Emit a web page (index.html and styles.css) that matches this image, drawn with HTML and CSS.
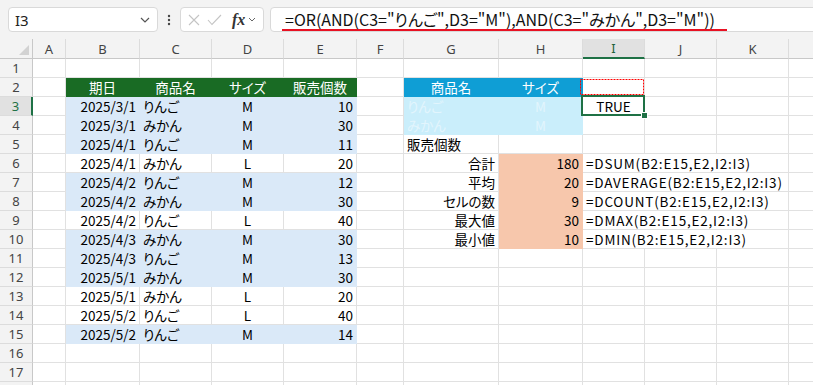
FILE: index.html
```html
<!DOCTYPE html>
<html lang="ja">
<head>
    <meta charset="UTF-8">
    <title>DSUM sheet</title>
    <link rel="stylesheet" href="styles.css">
</head>
<body>
    <div class="toolbar">
        <div class="namebox">
            <span>I3</span>
            <svg width="10" height="6" viewBox="0 0 10 6"><polyline points="1,1 5,5 9,1" fill="none" stroke="#555" stroke-width="1.2"/></svg>
        </div>
        <div class="dots">
            <svg width="4" height="12" viewBox="0 0 4 12"><circle cx="2" cy="2" r="1.2" fill="#444"/><circle cx="2" cy="6" r="1.2" fill="#444"/><circle cx="2" cy="10" r="1.2" fill="#444"/></svg>
        </div>
        <div class="fxbox">
            <svg width="12" height="12" viewBox="0 0 12 12"><path d="M1 1L11 11M11 1L1 11" stroke="#c4c4c4" stroke-width="1.1"/></svg>
            <svg width="15" height="12" viewBox="0 0 15 12"><polyline points="1,6 5,10.5 14,1" fill="none" stroke="#c4c4c4" stroke-width="1.1"/></svg>
            <span class="fx">fx</span>
            <svg width="8" height="5" viewBox="0 0 8 5"><polyline points="1,1 4,4 7,1" fill="none" stroke="#666" stroke-width="1"/></svg>
        </div>
        <div class="formula">
            <span class="ftext">=OR(AND(C3="りんご",D3="M"),AND(C3="みかん",D3="M"))</span>
        </div>
    </div>

    <div class="sheet">
        <!-- column headers -->
        <div class="corner"><svg width="10" height="10" viewBox="0 0 10 10"><polygon points="10,0 10,10 0,10" fill="#d2d2d2"/></svg></div>
        <div class="ch">A</div><div class="ch">B</div><div class="ch">C</div><div class="ch">D</div><div class="ch">E</div><div class="ch">F</div>
        <div class="ch">G</div><div class="ch">H</div><div class="ch sel">I</div><div class="ch">J</div><div class="ch">K</div><div class="ch last"></div>

        <!-- 1 -->
        <div class="rh">1</div>
        <div class="c"></div><div class="c"></div><div class="c"></div><div class="c"></div><div class="c"></div><div class="c"></div>
        <div class="c"></div><div class="c"></div><div class="c"></div><div class="c"></div><div class="c"></div><div class="c last"></div>

        <!-- 2 -->
        <div class="rh">2</div>
        <div class="c"></div>
        <div class="c th">期日</div><div class="c th">商品名</div><div class="c th">サイズ</div><div class="c th">販売個数</div>
        <div class="c"></div>
        <div class="c bh">商品名</div><div class="c bh">サイズ</div>
        <div class="c ref">
            <svg class="marquee" width="64" height="16" viewBox="0 0 64 16"><rect x="0.5" y="0.5" width="63" height="15" fill="none" stroke="#f00" stroke-width="1" stroke-dasharray="2 1"/></svg>
        </div>
        <div class="c"></div><div class="c"></div><div class="c last"></div>

        <!-- 3 -->
        <div class="rh sel">3</div>
        <div class="c"></div>
        <div class="c bl r">2025/3/1</div><div class="c bl">りんご</div><div class="c bl m">M</div><div class="c bl r">10</div>
        <div class="c"></div>
        <div class="c cy">りんご</div><div class="c cy m">M</div>
        <div class="c cur m">TRUE</div><div class="c"></div><div class="c"></div><div class="c last"></div>

        <!-- 4 -->
        <div class="rh">4</div>
        <div class="c"></div>
        <div class="c bl r">2025/3/1</div><div class="c bl">みかん</div><div class="c bl m">M</div><div class="c bl r">30</div>
        <div class="c"></div>
        <div class="c cy">みかん</div><div class="c cy m">M</div>
        <div class="c"></div><div class="c"></div><div class="c"></div><div class="c last"></div>

        <!-- 5 -->
        <div class="rh">5</div>
        <div class="c"></div>
        <div class="c bl r">2025/4/1</div><div class="c bl">りんご</div><div class="c bl m">M</div><div class="c bl r">11</div>
        <div class="c"></div>
        <div class="c wide">販売個数</div><div class="c"></div>
        <div class="c"></div><div class="c"></div><div class="c"></div><div class="c last"></div>

        <!-- 6 -->
        <div class="rh">6</div>
        <div class="c"></div>
        <div class="c r">2025/4/1</div><div class="c">みかん</div><div class="c m">L</div><div class="c r">20</div>
        <div class="c"></div>
        <div class="c r">合計</div><div class="c sa r">180</div>
        <div class="c span3">=DSUM(B2:E15,E2,I2:I3)</div><div class="c last"></div>

        <!-- 7 -->
        <div class="rh">7</div>
        <div class="c"></div>
        <div class="c bl r">2025/4/2</div><div class="c bl">りんご</div><div class="c bl m">M</div><div class="c bl r">12</div>
        <div class="c"></div>
        <div class="c r">平均</div><div class="c sa r">20</div>
        <div class="c span3">=DAVERAGE(B2:E15,E2,I2:I3)</div><div class="c last"></div>

        <!-- 8 -->
        <div class="rh">8</div>
        <div class="c"></div>
        <div class="c bl r">2025/4/2</div><div class="c bl">みかん</div><div class="c bl m">M</div><div class="c bl r">30</div>
        <div class="c"></div>
        <div class="c r">セルの数</div><div class="c sa r">9</div>
        <div class="c span3">=DCOUNT(B2:E15,E2,I2:I3)</div><div class="c last"></div>

        <!-- 9 -->
        <div class="rh">9</div>
        <div class="c"></div>
        <div class="c r">2025/4/2</div><div class="c">りんご</div><div class="c m">L</div><div class="c r">40</div>
        <div class="c"></div>
        <div class="c r">最大値</div><div class="c sa r">30</div>
        <div class="c span3">=DMAX(B2:E15,E2,I2:I3)</div><div class="c last"></div>

        <!-- 10 -->
        <div class="rh">10</div>
        <div class="c"></div>
        <div class="c bl r">2025/4/3</div><div class="c bl">みかん</div><div class="c bl m">M</div><div class="c bl r">30</div>
        <div class="c"></div>
        <div class="c r">最小値</div><div class="c sa r">10</div>
        <div class="c span3">=DMIN(B2:E15,E2,I2:I3)</div><div class="c last"></div>

        <!-- 11 -->
        <div class="rh">11</div>
        <div class="c"></div>
        <div class="c bl r">2025/4/3</div><div class="c bl">りんご</div><div class="c bl m">M</div><div class="c bl r">13</div>
        <div class="c"></div><div class="c"></div><div class="c"></div><div class="c"></div><div class="c"></div><div class="c"></div><div class="c last"></div>

        <!-- 12 -->
        <div class="rh">12</div>
        <div class="c"></div>
        <div class="c bl r">2025/5/1</div><div class="c bl">みかん</div><div class="c bl m">M</div><div class="c bl r">30</div>
        <div class="c"></div><div class="c"></div><div class="c"></div><div class="c"></div><div class="c"></div><div class="c"></div><div class="c last"></div>

        <!-- 13 -->
        <div class="rh">13</div>
        <div class="c"></div>
        <div class="c r">2025/5/1</div><div class="c">みかん</div><div class="c m">L</div><div class="c r">20</div>
        <div class="c"></div><div class="c"></div><div class="c"></div><div class="c"></div><div class="c"></div><div class="c"></div><div class="c last"></div>

        <!-- 14 -->
        <div class="rh">14</div>
        <div class="c"></div>
        <div class="c r">2025/5/2</div><div class="c">りんご</div><div class="c m">L</div><div class="c r">40</div>
        <div class="c"></div><div class="c"></div><div class="c"></div><div class="c"></div><div class="c"></div><div class="c"></div><div class="c last"></div>

        <!-- 15 -->
        <div class="rh">15</div>
        <div class="c"></div>
        <div class="c bl r">2025/5/2</div><div class="c bl">りんご</div><div class="c bl m">M</div><div class="c bl r">14</div>
        <div class="c"></div><div class="c"></div><div class="c"></div><div class="c"></div><div class="c"></div><div class="c"></div><div class="c last"></div>

        <!-- 16 -->
        <div class="rh">16</div>
        <div class="c"></div><div class="c"></div><div class="c"></div><div class="c"></div><div class="c"></div><div class="c"></div>
        <div class="c"></div><div class="c"></div><div class="c"></div><div class="c"></div><div class="c"></div><div class="c last"></div>

        <!-- 17 -->
        <div class="rh">17</div>
        <div class="c"></div><div class="c"></div><div class="c"></div><div class="c"></div><div class="c"></div><div class="c"></div>
        <div class="c"></div><div class="c"></div><div class="c"></div><div class="c"></div><div class="c"></div><div class="c last"></div>

        <!-- 18, only its top edge shows -->
        <div class="rh"></div>
        <div class="c"></div><div class="c"></div><div class="c"></div><div class="c"></div><div class="c"></div><div class="c"></div>
        <div class="c"></div><div class="c"></div><div class="c"></div><div class="c"></div><div class="c"></div><div class="c last"></div>
    </div>
</body>
</html>
```

FILE: styles.css
```css
body {
    margin: 0;
    background-color: #fff;
    font-family: "Noto Sans CJK JP", "Noto Sans", sans-serif;
    color: #000;
    height: 385px;
    overflow: hidden;
}

/* formula bar */
.toolbar {
    height: 39px;
    box-sizing: border-box;
    padding: 7px 0 0 8px;
    background-color: #f3f3f3;
    display: flex;
    align-items: flex-start;
    overflow: hidden;
}
.namebox, .fxbox, .formula {
    height: 25px;
    box-sizing: border-box;
    background-color: #fff;
    border: 1px solid #d9d9d9;
    border-radius: 4px;
    display: flex;
    align-items: center;
}
.namebox {
    width: 150px;
    justify-content: space-between;
    padding: 0 7px 0 6px;
    font-family: "Noto Sans", sans-serif;
    font-size: 15px;
    color: #222;
}
.dots {
    width: 22px;
    height: 25px;
    display: flex;
    align-items: center;
    justify-content: center;
}
.fxbox {
    width: 84px;
    padding: 0 0 0 7px;
    gap: 7px;
}
.fx {
    font-family: "Liberation Serif", serif;
    font-style: italic;
    font-weight: bold;
    font-size: 16px;
    color: #333;
    margin-left: 3px;
    margin-right: -4px;
}
.formula {
    flex: 1;
    margin-left: 6px;
    margin-right: -10px;
    padding-left: 11px;
}
.ftext {
    font-size: 16px;
    line-height: 20px;
    font-feature-settings: "palt";
    padding: 0 12px 0 3px;
    border-bottom: 2px solid #e81123;
    color: #111;
}

/* grid */
.sheet {
    display: grid;
    grid-template-columns: 33px 33px 74px 72px 72px 73px 47px 95px 84px 62px 72px 72px 1fr;
    grid-template-rows: 20px;
    grid-auto-rows: 19px;
    font-size: 13.5px;
    font-feature-settings: "palt";
}
.corner, .ch, .rh {
    box-sizing: border-box;
    background-color: #f3f3f3;
    color: #444;
    font-family: "Noto Sans", sans-serif;
    font-size: 13px;
    display: flex;
    align-items: center;
    justify-content: center;
}
.corner {
    border-right: 1px solid #c8c8c8;
    border-bottom: 1px solid #c8c8c8;
    align-items: flex-end;
    justify-content: flex-end;
    padding: 0 3px 3px 0;
}
.ch {
    border-right: 1px solid #dcdcdc;
    border-bottom: 1px solid #c8c8c8;
}
.ch.sel {
    background-color: #e1e1e1;
    border-bottom: 2px solid #1e7145;
    color: #1e5f3a;
}
.rh {
    border-right: 1px solid #c8c8c8;
    border-bottom: 1px solid #dcdcdc;
}
.rh.sel {
    background-color: #e1e1e1;
    border-right: 2px solid #1e7145;
    color: #1e7145;
}
.ch.last {
    border-right: none;
}

.c {
    box-sizing: border-box;
    border-right: 1px solid #e1e1e1;
    border-bottom: 1px solid #e1e1e1;
    padding: 0 3px;
    line-height: 18px;
    white-space: nowrap;
    overflow: hidden;
}
.c.last {
    border-right: none;
}
.r { text-align: right; }
.m { text-align: center; }
.wide { overflow: visible; }
.span3 {
    grid-column: span 3;
    letter-spacing: 0.8px;
}

.th {
    background-color: #196b24;
    border-color: #196b24;
    color: #fff;
    text-align: center;
}
.bh {
    background-color: #0f9ed5;
    border-color: #0f9ed5;
    color: #fff;
    text-align: center;
}
.bl {
    background-color: #dae9f8;
    border-color: #dae9f8;
}
.cy {
    background-color: #caeefb;
    border-color: #caeefb;
    color: #e2f5fd;
}
.sa {
    background-color: #f7c7ac;
    border-color: #f7c7ac;
}

/* I2 reference marquee and I3 active cell */
.ref {
    position: relative;
    overflow: visible;
}
.marquee {
    position: absolute;
    left: -3px;
    top: 1px;
    display: block;
}
.cur {
    position: relative;
    overflow: visible;
    z-index: 1;
}
.cur::before {
    content: "";
    position: absolute;
    left: -2px;
    top: -2px;
    right: -1px;
    bottom: -1px;
    border: 2px solid #1e7145;
}
.cur::after {
    content: "";
    position: absolute;
    right: -4px;
    bottom: -4px;
    width: 5px;
    height: 5px;
    background-color: #1e7145;
    border: 1px solid #fff;
}
```
